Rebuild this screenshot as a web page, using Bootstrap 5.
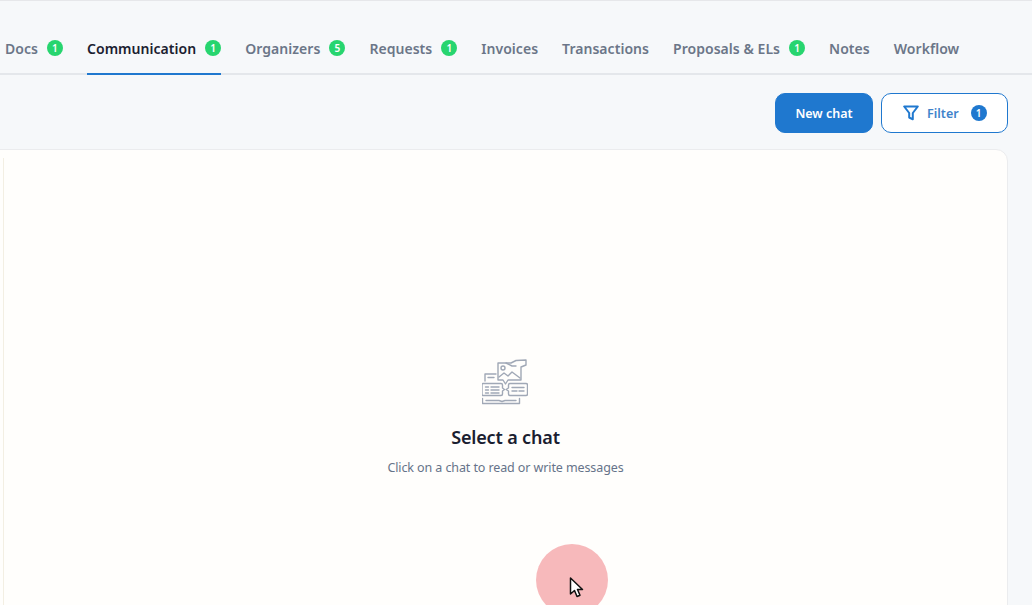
<!DOCTYPE html>
<html lang="en">
  <head>
    <meta charset="UTF-8" />
    <title>Communication</title>
    <link href="https://cdn.jsdelivr.net/npm/bootstrap@5.3.3/dist/css/bootstrap.min.css" rel="stylesheet" />
    <style>
      html, body { height: 605px; overflow: hidden; }
      body { background: #f6f8fa; font-family: "Noto Sans", "Open Sans", sans-serif; border-top: 1px solid #e6e7ea; position: relative; }
      .tab-strip { height: 74px; padding-left: 5px; padding-top: 22px; border-bottom: 2px solid #e4e7eb; gap: 24px; }
      .tab-item { height: 52px; color: #6b7688; font-size: 14px; font-weight: 600; letter-spacing: .04px; text-decoration: none; padding-top: 15px; line-height: 22px; }
      .tab-item.is-active { color: #1a2030; border-bottom: 2px solid #1f78cf; }
      .tab-count { width: 16px; height: 16px; border-radius: 50%; background: #27d56f; color: #fff; font-size: 10px; font-weight: 600; line-height: 16px; text-align: center; margin-left: 9px; margin-top: 2px; letter-spacing: 0; }
      .tool-row { padding: 18px 24px 0 0; gap: 8px; height: 74px; }
      .btn-chat { width: 98px; height: 40px; background: #1f78cf; border-color: #1f78cf; border-radius: 10px; font-size: 12.5px; font-weight: 600; padding: 2px 0 0; color: #fff; }
      .btn-filter { width: 127px; height: 40px; border: 1px solid #1f78cf; border-radius: 10px; background: #fff; color: #3f83cb; font-size: 12.5px; font-weight: 600; padding: 0 0 0 21px; gap: 8px; line-height: 20px; }
      .filter-label { padding-top: 2px; }
      .filter-count { width: 16px; height: 16px; border-radius: 50%; background: #1f78cf; color: #fff; font-size: 10px; line-height: 16px; text-align: center; margin-left: 4px; }
      .chat-card { margin: 0 24px 0 -12px; height: 470px; background: #fffefc; border: 1px solid #ebecee; border-radius: 12px; }
      .chat-side { width: 15px; margin-top: 8px; border-right: 1px solid #f3efe3; flex: none; }
      .chat-empty { padding-top: 209px; }
      .chat-empty svg { margin-left: -2px; }
      .chat-empty h2 { font-size: 18px; font-weight: 600; color: #1a2030; margin: 20px 0 10px; line-height: 24px; letter-spacing: -.15px; }
      .chat-empty p { font-size: 12.5px; color: #667389; line-height: 18px; margin: 0; letter-spacing: -.1px; }
      .click-spot { position: absolute; left: 536px; top: 543px; width: 72px; height: 72px; border-radius: 50%; background: #f7b9bb; }
      .mouse-arrow { position: absolute; left: 569px; top: 576px; }
    </style>
  </head>
  <body>
    <nav class="d-flex tab-strip">
      <a class="tab-item d-flex" href="#">Docs<span class="tab-count">1</span></a>
      <a class="tab-item d-flex is-active" href="#">Communication<span class="tab-count">1</span></a>
      <a class="tab-item d-flex" href="#">Organizers<span class="tab-count">5</span></a>
      <a class="tab-item d-flex" href="#">Requests<span class="tab-count">1</span></a>
      <a class="tab-item d-flex" href="#">Invoices</a>
      <a class="tab-item d-flex" href="#">Transactions</a>
      <a class="tab-item d-flex" href="#">Proposals &amp; ELs<span class="tab-count">1</span></a>
      <a class="tab-item d-flex" href="#">Notes</a>
      <a class="tab-item d-flex" href="#">Workflow</a>
    </nav>
    <div class="d-flex justify-content-end align-items-start tool-row">
      <button class="btn btn-chat" type="button">New chat</button>
      <button class="btn btn-filter d-flex align-items-center" type="button">
        <svg width="16" height="16" viewBox="0 0 16 16" fill="none" stroke="#1f78cf" stroke-width="2" stroke-linejoin="round"><path d="M1.200 1.500h13.600L9.800 8v6.300L6.200 12.500V8z"/></svg>
        <span class="filter-label">Filter</span><span class="filter-count">1</span>
      </button>
    </div>
    <div class="d-flex chat-card">
      <div class="chat-side"></div>
      <div class="flex-grow-1 text-center chat-empty">
        <svg width="46" height="46" viewBox="0 0 46 46" fill="none" stroke="#a0a8b6" stroke-width="1.400" stroke-linejoin="round" stroke-linecap="round">
          <path d="M16 21V4h8l5 0 5-2.500 10-.5v5l-5 2v13H26l-2.500 4-2.500-4z"/>
          <path d="M24 4l6 3h4"/>
          <circle cx="21" cy="9" r="2"/>
          <path d="M17 18l5-4 4 3 4-4 8 6"/>
          <path d="M3 22v-7h11M6 18.500h6"/>
          <path d="M1 24.500h18q1.500 0 1.500 1.500v3l2 1.500-2 1.500v3q0 1.500-1.500 1.500H1q-1 0-1-1.500V26q0-1.500 1-1.500z"/>
          <path d="M3.500 28h3M3.500 31h3M3.500 34h3M9 28h8M9 31h8M9 34h8"/>
          <path d="M28 24.500h16q1.500 0 1.500 1.500v9q0 1.500-1.500 1.500H28q-1.500 0-1.500-1.500v-3l-2.500-1.500 2.500-1.500v-3q0-1.500 1.500-1.500z"/>
          <path d="M30 28.500h12M30 32h5M37 32h5"/>
          <path d="M.5 39.500v5h37v-5M4 41.500h13l3 1 3-1h11"/>
        </svg>
        <h2>Select a chat</h2>
        <p>Click on a chat to read or write messages</p>
      </div>
    </div>
    <div class="click-spot"></div>
    <svg class="mouse-arrow" width="15" height="22" viewBox="0 0 15 22"><path d="M1.500 1v16l4-3.500 2.500 6 3-1.300-2.500-5.700h5z" fill="#fff" stroke="#111" stroke-width="1.500" stroke-linejoin="round"/></svg>
  </body>
</html>
